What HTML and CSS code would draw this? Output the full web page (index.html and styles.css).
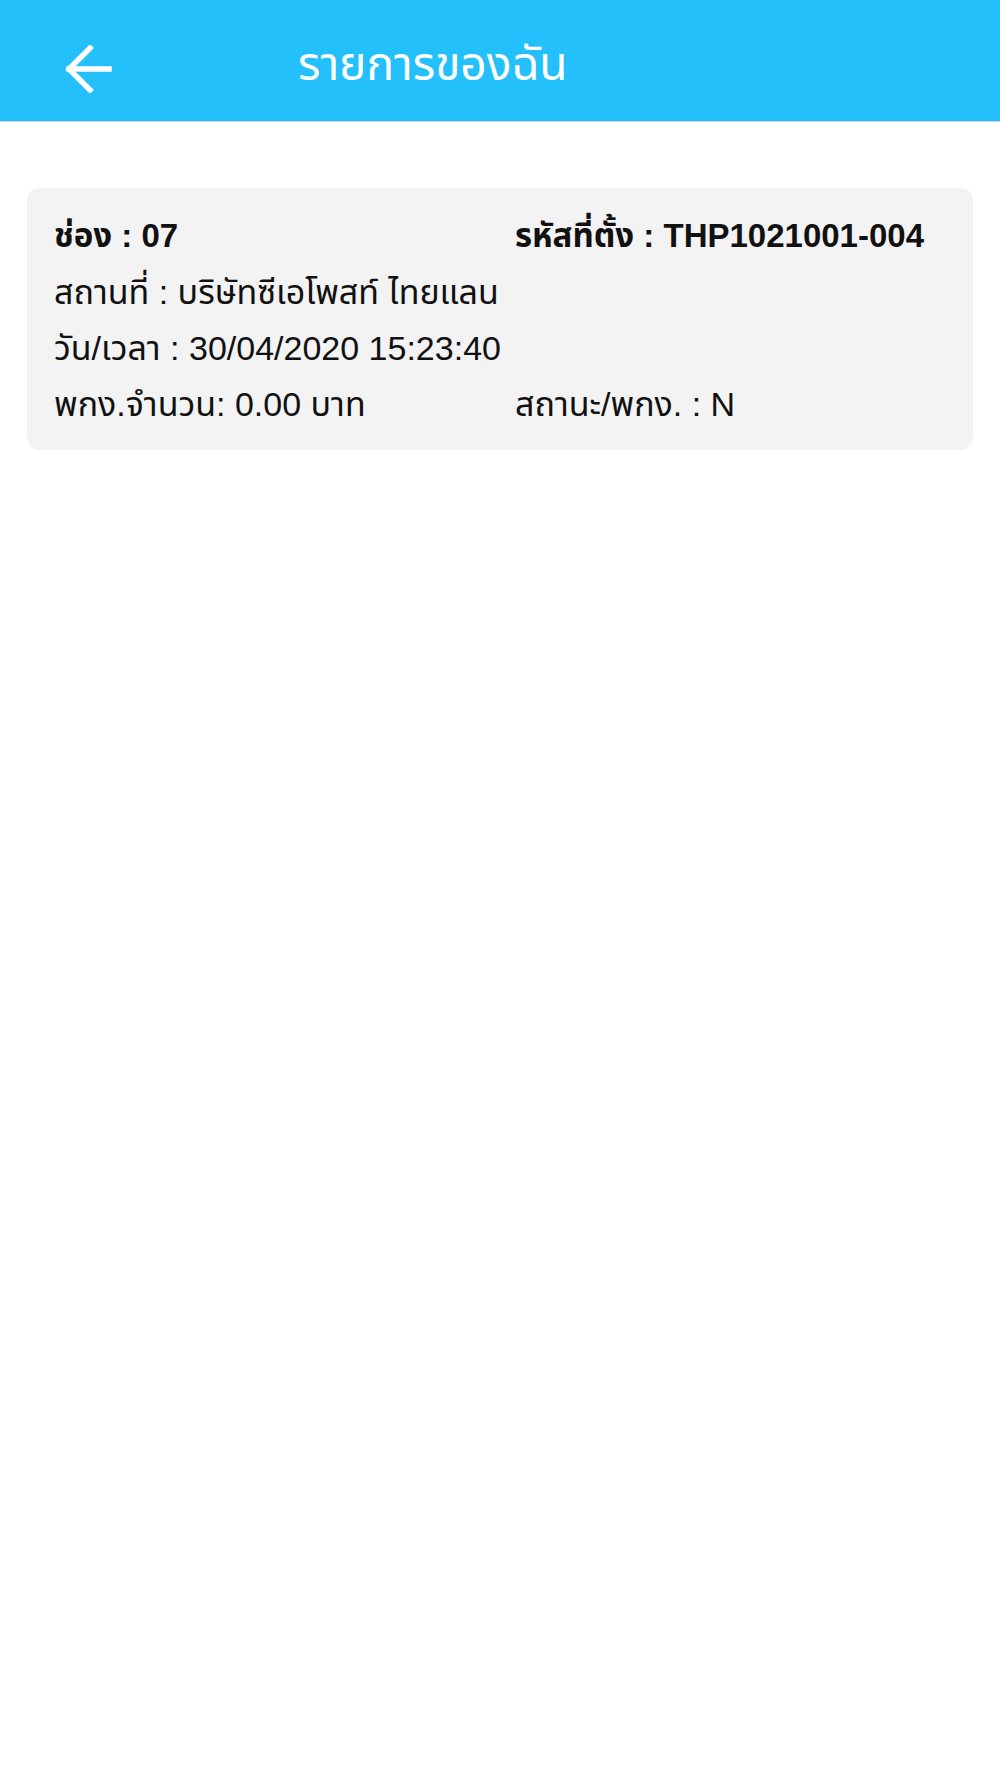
FILE: index.html
```html
<!DOCTYPE html>
<html lang="th">
  <head>
    <meta charset="UTF-8" />
    <meta name="viewport" content="width=device-width, initial-scale=1.0" />
    <title>รายการของฉัน</title>
    <link rel="stylesheet" href="styles.css">
  </head>
  <body>
    <header class="topbar">
      <button class="back" aria-label="back">
        <svg width="48" height="48" viewBox="0 0 48 48">
          <path d="M45 24H5M26 3L5 24l21 21" fill="none" stroke="#fff" stroke-width="5.5" stroke-linecap="square" />
        </svg>
      </button>
      <h1 class="title">รายการของฉัน</h1>
    </header>

    <div class="list">
      <div class="card">
        <div class="cell bold">ช่อง : 07</div>
        <div class="cell bold">รหัสที่ตั้ง : THP1021001-004</div>
        <div class="cell clip">สถานที่ : บริษัทซีเอโพสท์ ไทยแลนด์ จำกัด</div>
        <div class="cell"></div>
        <div class="cell">วัน/เวลา : 30/04/2020 15:23:40</div>
        <div class="cell"></div>
        <div class="cell">พกง.จำนวน: 0.00 บาท</div>
        <div class="cell">สถานะ/พกง. : N</div>
      </div>
    </div>
  </body>
</html>
```

FILE: styles.css
```css
body {
  margin: 0;
  font-family: "Liberation Sans", "Noto Sans Thai", "Noto Sans", sans-serif;
  background: #fff;
  color: #111;
}

.topbar {
  height: 122px;
  background-color: #24c0fc;
  border-bottom: 1px solid #cfd3d6;
  box-sizing: border-box;
  display: flex;
  align-items: center;
  padding-left: 64px;
}

.back {
  background: none;
  border: none;
  padding: 0;
  width: 48px;
  height: 48px;
  margin-top: 16px;
  cursor: pointer;
}

.title {
  margin: 10px 0 0 186px;
  color: #fff;
  font-size: 46px;
  font-weight: normal;
}

.list {
  padding: 66px 27px 0;
}

.card {
  background: #f3f3f3;
  border-radius: 12px;
  padding: 20px 27px 18px;
  display: grid;
  grid-template-columns: 461px 1fr;
  font-size: 34px;
  line-height: 56px;
}

.cell {
  white-space: nowrap;
}

.bold {
  font-weight: bold;
  font-size: 33px;
}

.clip {
  overflow: hidden;
  max-width: 446px;
}
```
